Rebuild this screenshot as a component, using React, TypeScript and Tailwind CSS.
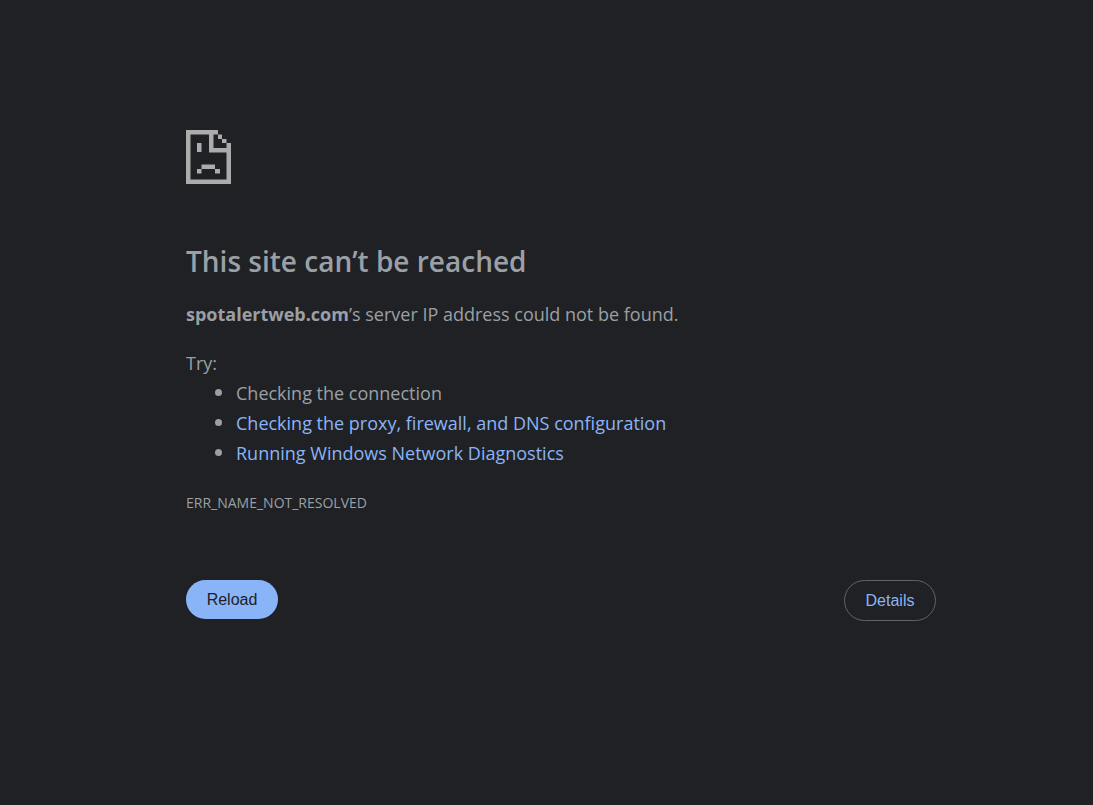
const suggestions = [
  { text: 'Checking the connection' },
  { text: 'Checking the proxy, firewall, and DNS configuration', href: '#proxy' },
  { text: 'Running Windows Network Diagnostics', href: '#diagnostics' },
];

function SadPageIcon() {
  return (
    <svg
      className="block h-[54px] w-[45px] text-[#acacac]"
      viewBox="0 0 45 54"
      fill="currentColor"
      aria-hidden="true"
    >
      {/* Page outline */}
      <path d="M0 0H32V4.5H4.5V49.5H40.5V22.5H23V4H27.5V18H40.5V13H45V54H0Z" />
      {/* Folded corner */}
      <path d="M32 4.5H36V9H32ZM36 9H40.5V13H36Z" />
      {/* Face */}
      <path d="M11 13H15.5V22H11ZM15.5 34.5H29V39H15.5ZM11 39H15.5V43.5H11ZM29 39H34V43.5H29Z" />
    </svg>
  );
}

export default function App() {
  return (
    <div className="min-h-screen bg-[#202124] font-['Segoe_UI','Open_Sans',sans-serif] text-[18px] leading-[30px] text-[#9aa0a6]">
      <main className="mx-auto max-w-[779px] pt-[130px] pl-[29px]">
        <SadPageIcon />

        <h1 className="mt-[59px] text-[28px] leading-9 font-semibold">This site can’t be reached</h1>
        <p className="mt-5">
          <strong className="font-bold">spotalertweb.com</strong>’s server IP address could not be found.
        </p>

        {/* Suggestions */}
        <div className="mt-[19px]">
          <p>Try:</p>
          <ul className="list-disc pl-[50px] marker:text-[20px]">
            {suggestions.map(({ text, href }) => (
              <li key={text}>
                {href ? (
                  <a href={href} className="text-[#8ab4f8]">
                    {text}
                  </a>
                ) : (
                  text
                )}
              </li>
            ))}
          </ul>
        </div>

        <p className="mt-5 text-[14px]">ERR_NAME_NOT_RESOLVED</p>

        {/* Actions */}
        <div className="mt-[62px] flex items-start justify-between font-['Liberation_Sans',sans-serif] text-base leading-[19px]">
          <button type="button" className="min-w-[92px] rounded-full bg-[#8ab4f8] px-5 py-2.5 text-[#202124]">
            Reload
          </button>
          <button type="button" className="min-w-[92px] rounded-full border border-[#5f6368] px-5 py-2.5 text-[#8ab4f8]">
            Details
          </button>
        </div>
      </main>
    </div>
  );
}
